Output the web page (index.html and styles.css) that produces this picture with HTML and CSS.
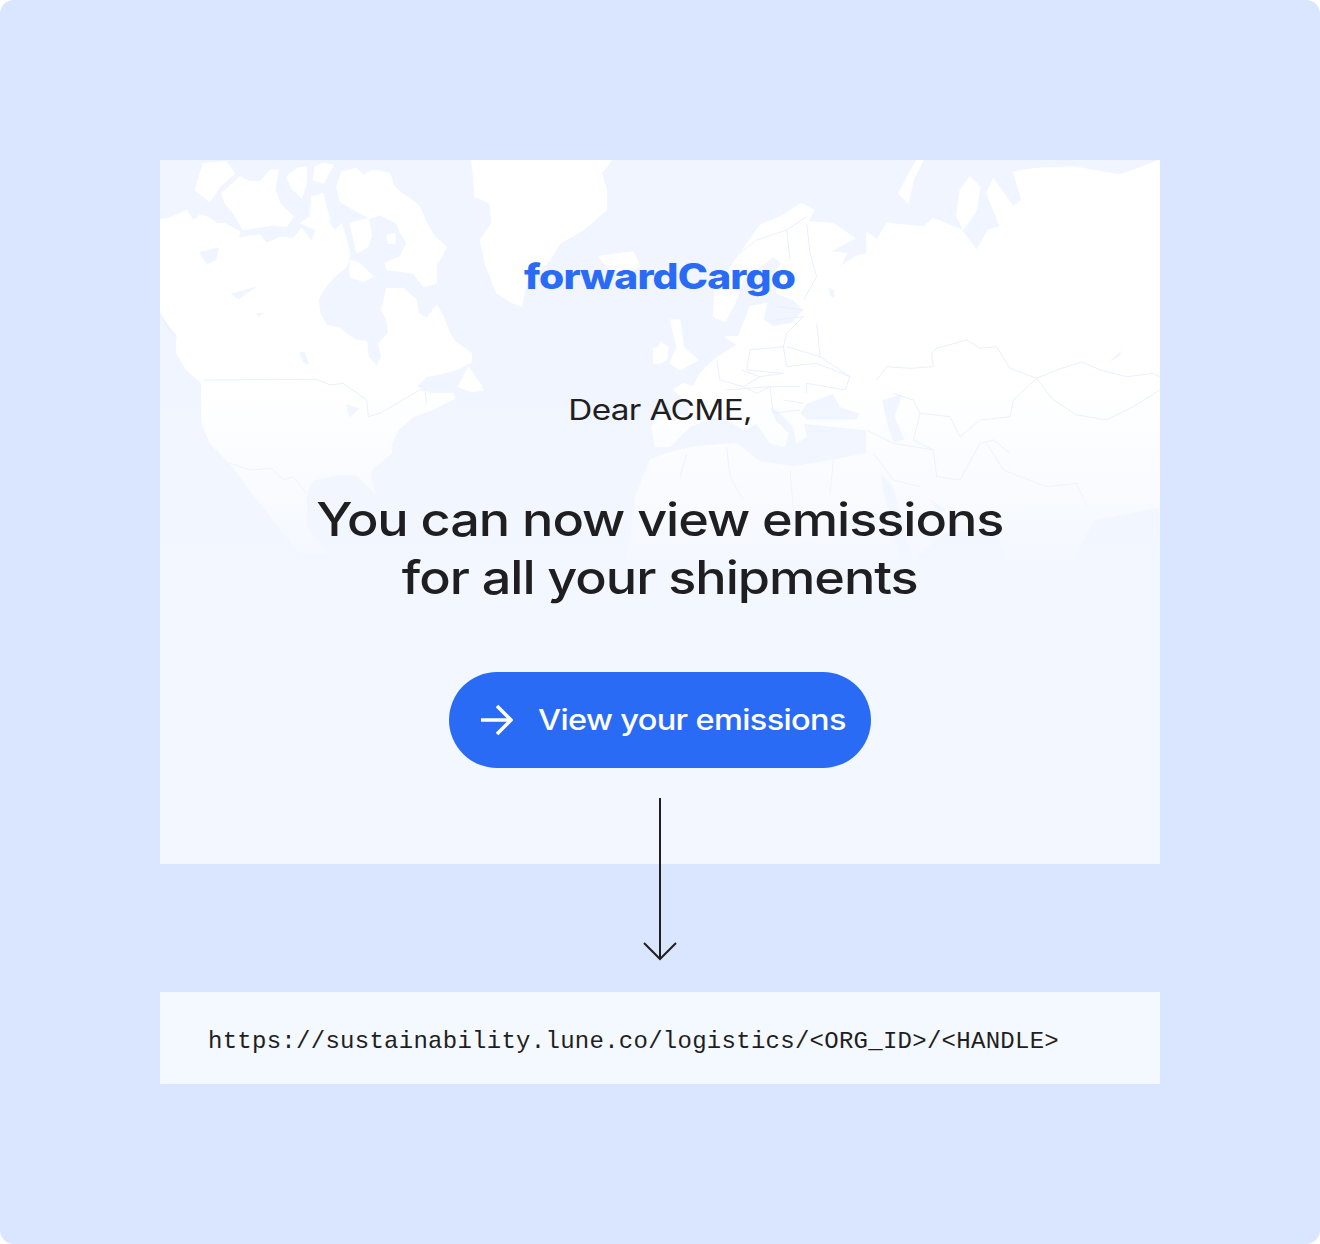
FILE: index.html
```html
<!DOCTYPE html>
<html lang="en">
<head>
  <meta charset="UTF-8">
  <meta name="viewport" content="width=device-width, initial-scale=1.0">
  <title>Sustainability email</title>
  <link rel="stylesheet" href="styles.css">
</head>
<body>
  <div class="frame">
    <!-- Email preview -->
    <div class="email-card">
      <svg class="world-map" viewBox="0 0 1000 704" aria-hidden="true">
        <defs>
          <linearGradient id="mapFade" gradientUnits="userSpaceOnUse" x1="0" y1="230" x2="0" y2="420">
            <stop offset="0" stop-color="#f3f7ff" stop-opacity="0"/>
            <stop offset="1" stop-color="#f3f7ff" stop-opacity="1"/>
          </linearGradient>
        </defs>
        <!-- Americas -->
        <g transform="scale(.33333)">
          <path class="land" d="M0,178 L25,175 L50,165 L80,150 L100,182 L120,165 L145,172 L170,190 L195,190 L240,215 L235,235 L270,228 L300,225 L320,250 L360,232 L400,235 L425,205 L455,245 L470,205 L500,180 L525,210 L545,190 L560,240 L570,285 L560,320 L535,340 L510,365 L490,390 L475,420 L480,460 L500,495 L540,505 L585,540 L620,545 L625,590 L650,618 L665,590 L655,550 L685,520 L680,480 L665,450 L680,385 L730,385 L770,420 L775,460 L800,475 L830,435 L850,470 L865,510 L885,545 L935,580 L935,605 L900,625 L850,640 L800,650 L770,680 L810,700 L880,700 L885,715 L815,750 L760,770 L715,810 L695,850 L695,880 L640,925 L630,945 L645,1000 L620,975 L590,945 L530,945 L460,960 L440,1000 L440,1100 L500,1180 L420,1180 L300,1030 L240,950 L210,910 L150,850 L125,790 L125,670 L80,630 L50,580 L50,525 L0,460 Z
            M555,730 L600,745 L570,775 Z M115,275 L180,260 L170,300 L140,315 Z M210,400 L300,375 L235,420 Z M415,575 L435,575 L450,615 L430,610 Z M285,460 L325,455 L295,470 Z"/>
          <path class="land" d="M530,80 L545,35 L590,25 L610,45 L640,30 L690,40 L700,75 L725,100 L750,115 L780,140 L800,190 L825,230 L860,260 L840,300 L830,310 L830,370 L790,380 L760,340 L730,335 L680,330 L675,310 L720,290 L740,250 L720,215 L710,190 L660,165 L630,175 L600,160 L540,125 Z
            M105,90 L130,10 L200,5 L225,40 L180,80 L150,125 Z
            M185,100 L240,50 L270,65 L300,65 L330,30 L355,30 L345,90 L360,130 L400,170 L380,200 L340,195 L250,210 L220,160 L195,130 Z
            M380,50 L410,25 L440,20 L440,70 L425,115 L395,85 Z M465,20 L490,10 L520,15 L490,70 L460,60 Z
            M455,110 L490,100 L500,145 L510,180 L470,210 L420,190 L450,170 Z
            M570,190 L625,175 L635,225 L625,260 L590,280 Z M570,300 L600,310 L640,350 L610,365 L570,350 Z M680,225 L705,220 L705,250 L685,250 Z
            M935,0 L1355,0 L1325,40 L1340,90 L1340,150 L1270,210 L1200,250 L1170,300 L1100,370 L1085,440 L1060,430 L1010,400 L975,310 L960,240 L995,190 L990,130 L945,110 L940,50 Z
            M1315,290 L1345,285 L1420,275 L1440,320 L1380,345 L1350,330 Z
            M925,620 L960,670 L970,690 L935,695 L895,680 Z
            M1480,565 L1500,560 L1500,610 L1480,610 Z"/>
          <path class="border" d="M130,660 L470,658 L510,675 L550,670 L620,720 L625,770 L660,760 L720,725 L780,690 L795,690 L800,730 M210,910 L270,930 L335,925 L370,960 L400,950 L440,1000 M0,460 L30,515 L50,530"/>
        </g>
        <!-- Europe, Asia, Africa -->
        <g transform="translate(500) scale(.33333)">
          <path class="land" d="M1500,0 L1380,45 L1240,20 L1130,25 L1060,35 L1085,120 L1060,140 L1000,55 L980,100 L1020,200 L985,210 L950,270 L905,210 L820,175 L790,200 L680,190 L650,240 L620,215 L620,280 L585,290 L540,320 L560,280 L510,275 L585,235 L520,190 L445,185 L462,150 L425,130 L360,170 L300,195 L240,280 L165,390 L160,470 L195,485 L230,420 L250,360 L340,290 L365,310 L350,330 L350,400 L400,420 L430,450 L395,490 L340,500 L310,480 L320,430 L270,440 L235,530 L195,530 L230,555 L160,600 L120,640 L100,680 L70,670 L40,690 L90,730 L85,770 L0,760 L-25,800 L-15,860 L30,860 L90,800 L150,775 L190,770 L250,810 L290,790 L330,850 L375,860 L385,820 L345,780 L330,740 L350,750 L400,800 L410,850 L440,830 L430,790 L620,810 L620,880 L520,900 L400,920 L300,905 L230,850 L100,860 L20,880 L-30,900 L-70,1000 L-100,1200 L1500,1200 Z
            M505,380 L525,390 L525,415 L510,410 Z
            M440,730 L520,700 L540,740 L600,760 L590,780 L440,780 L420,760 Z
            M665,720 L730,700 L705,770 L735,840 L700,850 L680,790 Z
            M1395,540 L1380,590 L1340,610 L1385,570 Z
            M660,940 L700,980 L760,1200 L720,1200 L670,1000 Z
            M800,1010 L860,1050 L840,1060 Z
            M760,1200 L850,1120 L1000,1100 L1040,1200 Z
            M1500,1040 L1400,1060 L1300,1080 L1240,1200 L1500,1200 Z"/>
          <path class="land" d="M715,100 L770,0 L790,0 L760,60 L745,130 Z M900,90 L930,50 L960,80 L950,150 L910,210 L890,170 Z M30,480 L60,480 L70,560 L115,600 L60,630 L30,610 L50,560 Z M0,545 L25,560 L20,600 L0,610 Z M345,800 L365,800 L360,830 Z"/>
          <path class="border" d="M650,660 L680,620 L750,625 L820,620 L815,580 L830,565 L920,540 L960,565 L1010,560 L1050,625 L1130,655 L1190,630 L1265,605 L1320,630 L1400,650 L1480,640 L1500,650
            M1130,655 L1180,720 L1250,765 L1340,780 L1420,740 L1500,690
            M1130,655 L1060,720 L1050,770 L960,780 L900,830 L870,770 L780,760 L760,720 L700,700
            M620,810 L700,850 L820,870 L830,950 L900,960 L960,850 L1000,840 L1050,880
            M980,850 L1030,930 L1160,980 L1250,970 L1280,1040
            M200,860 L210,950 L250,1020 M80,880 L60,950 M390,930 L400,1050 M520,900 L510,1000 M640,880 L700,960 L780,980
            M240,280 L290,240 L380,210 L440,170 M380,210 L390,300 M440,190 L450,280 L470,350 L430,420
            M430,470 L380,520 L370,560 L380,620 L470,610 L570,650 L555,690 L440,670 L440,700
            M270,570 L370,560 M270,570 L260,630 L370,640 M170,600 L180,660 L250,680 L300,650 M245,630 L300,650 L370,640
            M200,690 L330,680 L420,680 M330,680 L340,760 L420,750 M470,490 L480,590 L570,650 M380,560 L480,590
            M350,440 L430,450 M345,480 L430,470 M250,680 L290,700 L330,680 M370,720 L430,730 M780,760 L760,840 L820,870"/>
        </g>
        <rect class="map-fade" x="0" y="230" width="1000" height="474"/>
      </svg>

      <div class="email-content">
        <div class="logo"><span class="wide-logo">forwardCargo</span></div>
        <p class="greeting"><span class="wide-greeting">Dear ACME,</span></p>
        <h1 class="headline"><span class="wide-headline">You can now view emissions<br>for all your shipments</span></h1>
        <a class="cta-button" href="#">
          <svg class="cta-icon" viewBox="0 0 32 32" aria-hidden="true">
            <path d="M0 16H30M16 2L30 16L16 30"/>
          </svg>
          <span class="cta-label">View your emissions</span>
        </a>
      </div>

      <svg class="link-arrow" viewBox="0 0 36 164" aria-hidden="true">
        <path d="M18 0V161M2 145L18 161L34 145"/>
      </svg>
    </div>

    <!-- Link the button goes to -->
    <div class="url-box">https://sustainability.lune.co/logistics/&lt;ORG_ID&gt;/&lt;HANDLE&gt;</div>
  </div>
</body>
</html>
```

FILE: styles.css
```css
html, body {
  margin: 0;
  padding: 0;
  background-color: #fff;
}
.frame {
  height: 1244px;
  box-sizing: border-box;
  padding: 160px;
  display: flex;
  flex-direction: column;
  gap: 128px;
  background-color: #dae6ff;
  border-radius: 14px;
  font-family: Inter, sans-serif;
  color: #1f1f21;
}
.email-card {
  position: relative;
  height: 704px;
  background-color: #f0f5ff;
}
.world-map {
  position: absolute;
  left: 0;
  top: 0;
  width: 1000px;
  height: 704px;
}
.land {
  fill: #fff;
  fill-rule: evenodd;
  stroke: #fff;
  stroke-width: 3;
  stroke-linejoin: round;
}
.border {
  fill: none;
  stroke: #e8efff;
  stroke-width: 3;
}
.map-fade {
  fill: url(#mapFade);
}
.email-content {
  position: relative;
  display: flex;
  flex-direction: column;
  align-items: center;
  padding-top: 92px;
}
/* the brand font is an extended one, Inter gets widened to match */
.wide-logo, .wide-greeting, .wide-headline {
  display: inline-block;
  letter-spacing: -0.02em;
}
.wide-logo {
  transform: scaleX(1.164);
}
.wide-greeting {
  transform: scaleX(1.19);
}
.wide-headline {
  transform: scaleX(1.135);
}
.logo {
  font-size: 35px;
  line-height: 48px;
  font-weight: 800;
  color: #2a6bf6;
}
.greeting {
  margin: 90px 0 0 0;
  font-size: 28px;
  line-height: 40px;
}
.headline {
  margin: 60px 0 0 0;
  font-size: 46px;
  line-height: 58px;
  font-weight: 500;
  text-align: center;
}
.cta-button {
  margin-top: 66px;
  width: 422px;
  height: 96px;
  box-sizing: border-box;
  padding-left: 32px;
  display: flex;
  align-items: center;
  gap: 25px;
  background-color: #2a6bf6;
  border-radius: 48px;
  color: #fff;
  font-size: 28px;
  font-weight: 500;
  text-decoration: none;
}
.cta-label {
  letter-spacing: -0.02em;
  transform: scaleX(1.162);
  transform-origin: left center;
}
.cta-icon {
  width: 32px;
  height: 32px;
  fill: none;
  stroke: #fff;
  stroke-width: 3.5;
}
.link-arrow {
  position: absolute;
  left: 482px;
  top: 638px;
  width: 36px;
  height: 164px;
  fill: none;
  stroke: #1f1f21;
  stroke-width: 2;
}
.url-box {
  height: 92px;
  box-sizing: border-box;
  padding: 6px 0 0 48px;
  display: flex;
  align-items: center;
  background-color: #f4f8ff;
  font-family: "Liberation Mono", monospace;
  font-size: 24px;
  letter-spacing: 0.27px;
  color: #1f1f21;
}
```
